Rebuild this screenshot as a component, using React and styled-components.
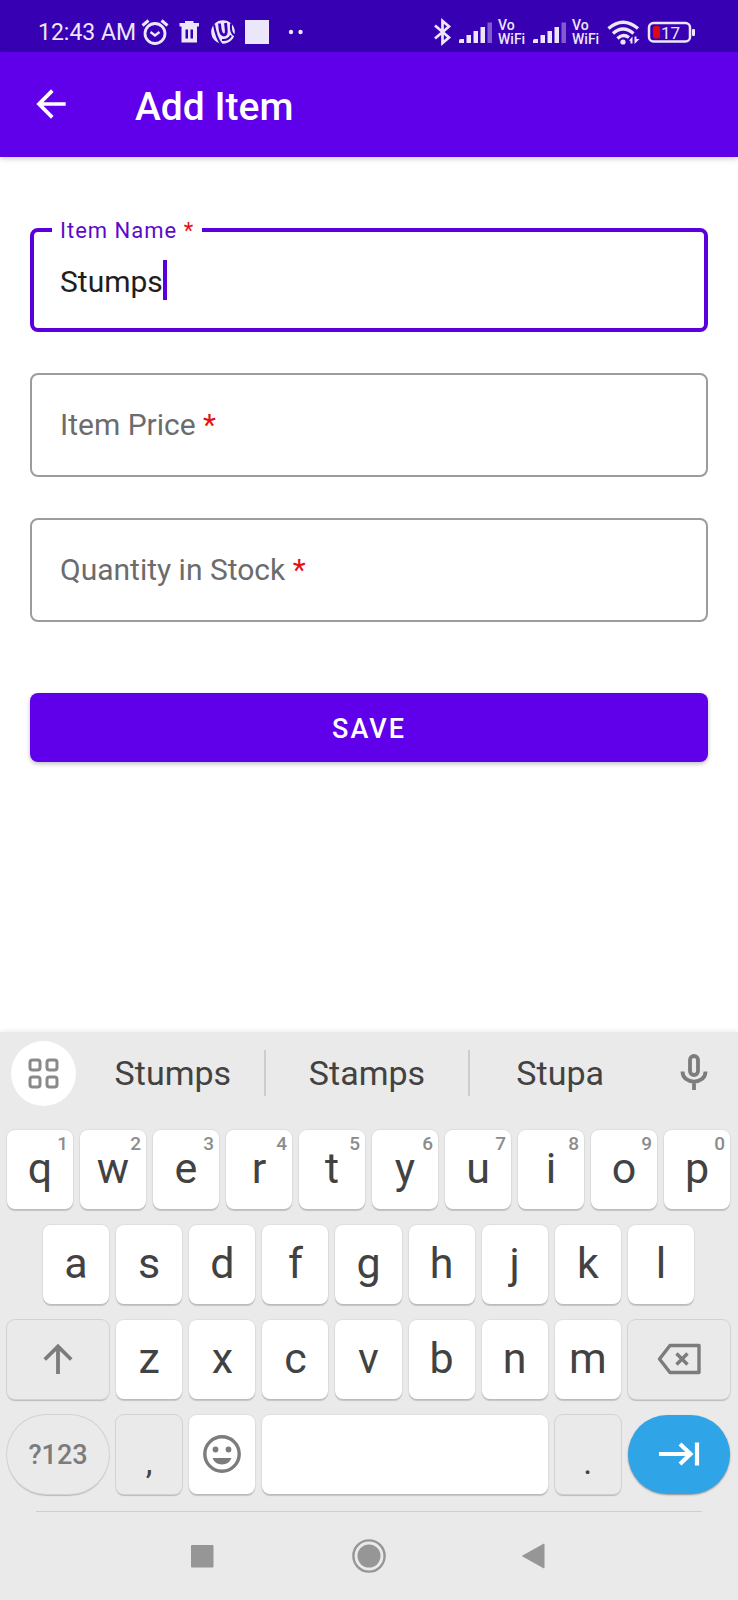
import React, { useState } from "react";
import styled, { createGlobalStyle, css } from "styled-components";
import { MdArrowBack } from "react-icons/md";

const color = {
  primary: "#6000ea",
  primaryDark: "#3700b3",
  outline: "#5a00dc",
  label: "#5b0acb",
  required: "#e60f0f",
  hint: "#6c6c6c",
  keyboard: "#eaeaea",
  keyText: "#424242",
  keyIcon: "#7c7c7c",
  nav: "#969696",
  enter: "#2fa4e7",
  status: "#ece6fb",
};

const GlobalStyle = createGlobalStyle`
  *, *::before, *::after { box-sizing: border-box; }
  body { margin: 0; background: #fff; font-family: Roboto, "Liberation Sans", sans-serif; }
  button, input { font: inherit; margin: 0; padding: 0; border: 0; background: none; }
  button { cursor: pointer; }
  svg { display: block; flex: none; }
`;

const Screen = styled.div`
  min-height: 100vh;
  display: flex;
  flex-direction: column;
`;

/* Status bar */
const StatusBar = styled.div`
  height: 52px;
  padding: 12px 42px 0 38px;
  display: flex;
  align-items: center;
  justify-content: space-between;
  background: ${color.primaryDark};
  color: ${color.status};
`;
const StatusGroup = styled.div`
  display: flex;
  align-items: center;
  gap: ${(p) => p.$gap}px;
`;
const Clock = styled.time`
  font-size: 23px;
  line-height: 28px;
  padding: 2px 2px 0 0;
  white-space: nowrap;
`;
const VoWifi = styled.span`
  width: 29px;
  display: flex;
  flex-direction: column;
  font-size: 14px;
  line-height: 14px;
  font-weight: 500;
  white-space: nowrap;
`;

/* App bar */
const AppBar = styled.header`
  position: relative;
  height: 105px;
  padding: 0 29px;
  display: flex;
  align-items: center;
  gap: 62px;
  background: ${color.primary};
  color: #fff;
  box-shadow: 0 1px 6px rgba(0, 0, 0, 0.25);
`;
const BackButton = styled.button`
  color: inherit;
  padding-bottom: 2px;
`;
const Title = styled.h1`
  margin: 0;
  padding-top: 4px;
  font-size: 39px;
  line-height: 44px;
  font-weight: 500;
`;

/* Form */
const Form = styled.form`
  flex: 1;
  padding: 71px 30px 40px;
  display: flex;
  flex-direction: column;
  gap: 41px;
`;
const FieldBox = styled.div`
  position: relative;
  height: 104px;
  display: flex;
  align-items: center;
  padding: 0 ${(p) => (p.$focused ? 26 : 28)}px;
  border: ${(p) => (p.$focused ? `4px solid ${color.outline}` : "2px solid #9c9c9c")};
  border-radius: 8px;
`;
const FieldLabel = styled.label`
  position: absolute;
  pointer-events: none;
  white-space: nowrap;
  ${(p) =>
    p.$floating
      ? css`
          top: -15px;
          left: 18px;
          padding: 0 8px;
          background: #fff;
          color: ${color.label};
          font-size: 22px;
          line-height: 28px;
          letter-spacing: 1px;
        `
      : css`
          top: 32px;
          left: 28px;
          color: ${color.hint};
          font-size: 30px;
          line-height: 36px;
        `}
`;
const Required = styled.span`
  color: ${color.required};
`;
const FieldInput = styled.input`
  height: 42px;
  padding-top: 2px;
  font-size: 30px;
  color: #1e1e1e;
  outline: none;
  caret-color: transparent;
  ${(p) => (p.$hug ? "field-sizing: content;" : "flex: 1; min-width: 0;")}
`;
const Caret = styled.span`
  width: 4px;
  height: 40px;
  background: ${color.outline};
`;
const SaveButton = styled.button`
  height: 69px;
  margin-top: 30px;
  padding-top: 2px;
  border-radius: 8px;
  background: ${color.primary};
  color: #fff;
  font-size: 27px;
  font-weight: 500;
  letter-spacing: 2px;
  box-shadow: 0 2px 4px rgba(0, 0, 0, 0.25);
`;

/* Keyboard */
const Keyboard = styled.section`
  background: ${color.keyboard};
  color: ${color.keyText};
  box-shadow: 0 -1px 5px rgba(0, 0, 0, 0.08);
`;
const SuggestionBar = styled.div`
  height: 82px;
  display: grid;
  grid-template-columns: 82px 184fr 205fr 180fr 88px;
  align-items: center;
`;
const AppsButton = styled.button`
  width: 65px;
  height: 65px;
  margin-left: 11px;
  border-radius: 50%;
  background: #fff;
  display: grid;
  place-items: center;
`;
const Suggestion = styled.button`
  height: 46px;
  color: inherit;
  font-size: 34px;
  line-height: 40px;
  border-right: ${(p) => (p.$divided ? "2px solid #cdcdcd" : "0")};
`;
const MicButton = styled.button`
  display: grid;
  place-items: center;
`;
const Keys = styled.div`
  display: flex;
  flex-direction: column;
  gap: 16px;
  padding: 16px 8px 16px 7px;
`;
const KeyRow = styled.div`
  display: flex;
  gap: 7px;
  padding: 0 ${(p) => (p.$inset ? 36 : 0)}px;
`;
const keyTone = {
  letter: css`
    background: #fff;
    box-shadow: 0 0 1px 1px rgba(0, 0, 0, 0.05), 0 2px 1px rgba(0, 0, 0, 0.16);
  `,
  quiet: css`
    background: ${color.keyboard};
    box-shadow: 0 0 0 1px #d2d2d2, 0 2px 1px rgba(0, 0, 0, 0.2);
  `,
  enter: css`
    background: ${color.enter};
    box-shadow: 0 1px 2px rgba(0, 0, 0, 0.4);
  `,
};
const Key = styled.button`
  position: relative;
  flex: ${(p) => p.$span || 66} 1 0;
  min-width: 0;
  height: 79px;
  display: flex;
  align-items: center;
  justify-content: center;
  padding-bottom: 3px;
  border-radius: ${(p) => (p.$round ? 40 : 8)}px;
  color: inherit;
  font-size: 43px;
  line-height: 50px;
  ${(p) => keyTone[p.$tone || "letter"]}
`;
const IconKey = styled(Key)`
  padding: 0 0 2px;
  color: ${color.keyIcon};
`;
const ModeKey = styled(IconKey)`
  padding: 0;
  font-size: 27px;
  font-weight: 500;
`;
const PunctuationKey = styled(Key)`
  padding: 14px 0 0;
  font-size: 34px;
`;
const KeyHint = styled.span`
  position: absolute;
  top: 3px;
  right: 5px;
  font-size: 19px;
  line-height: 22px;
  font-weight: 500;
  color: #8c8c8c;
`;
const NavBar = styled.nav`
  height: 90px;
  display: grid;
  grid-template-columns: repeat(3, 1fr);
  padding: 2px 16% 0;
  position: relative;
  &::before {
    content: "";
    position: absolute;
    top: 1px;
    left: 36px;
    right: 36px;
    height: 1px;
    background: #cfcfcf;
  }
`;
const NavButton = styled.button`
  display: grid;
  place-items: center;
`;

/* Icons */
const AlarmIcon = () => (
  <svg width="34" height="30" viewBox="0 0 34 30" fill="none" stroke="currentColor">
    <circle cx="17" cy="16.5" r="10" strokeWidth="2.8" />
    <path d="M4.5 8.5 L10.5 3.5 M29.5 8.5 L23.5 3.5" strokeWidth="3" />
    <path d="M12.5 15 L17 18.5 L21.5 15" strokeWidth="2.4" />
  </svg>
);
const TrashIcon = () => (
  <svg width="34" height="30" viewBox="0 0 34 30" fill="currentColor" fillRule="evenodd">
    <path d="M7.5 6 H13 V4 H21.5 V6 H27 V9.5 H7.5Z" />
    <path d="M9.5 9 H25 V25.500 H9.5Z M13.500 12.5 V21.500 H16 V12.5Z M18.5 12.5 V21.500 H21 V12.5Z" />
  </svg>
);
const TorrentIcon = () => (
  <svg width="34" height="30" viewBox="0 0 34 30" fill="none">
    <circle cx="17" cy="15" r="11.8" fill="currentColor" />
    <path d="M8 7.500 C9.500 17 11 22 15.500 27.500" stroke={color.primaryDark} strokeWidth="2" />
    <path d="M13.500 6.500 C14 13 14.500 18 18 18 C21 18 20.500 14 19.500 6" stroke={color.primaryDark} strokeWidth="2.800" />
    <path d="M25 6.500 C24.500 13 25.500 17.500 29 18.500 M16 23 C20 23.500 23.500 21.500 25 18.500" stroke={color.primaryDark} strokeWidth="2" />
  </svg>
);
const SquareIcon = () => (
  <svg width="34" height="30" viewBox="0 0 34 30" fill="currentColor">
    <rect x="5" y="3" width="24" height="24" />
  </svg>
);
const MoreDots = () => (
  <svg width="34" height="30" viewBox="0 0 34 30" fill="currentColor">
    <circle cx="17" cy="15" r="2.2" />
    <circle cx="26.5" cy="15" r="2.2" />
  </svg>
);
const BluetoothIcon = () => (
  <svg width="20" height="30" viewBox="0 0 20 30" fill="none" stroke="currentColor" strokeWidth="2.7">
    <path d="M2 8.500 L16 20.5 L9.5 26 V4 L16 9.5 L2 21.500" />
  </svg>
);
const SignalIcon = () => (
  <svg width="33" height="30" viewBox="0 0 33 30" fill="currentColor">
    <path d="M0 26 V23.500 Q0 22 1.500 22 H5 V26Z" />
    <rect x="7.500" y="18" width="4.500" height="8" />
    <rect x="14.500" y="14" width="4.500" height="12" />
    <rect x="21.500" y="10" width="4.500" height="16" />
    <rect x="28.500" y="5.500" width="4.500" height="20.500" opacity=".4" />
  </svg>
);
const WifiIcon = () => (
  <svg width="33" height="30" viewBox="0 0 33 30" fill="none" stroke="currentColor" strokeWidth="3.300">
    <path d="M1.5 11.5 Q16 -1 31 11.5" />
    <path d="M6 16.5 Q16 7.500 26.500 16.5" />
    <path d="M10.500 21.500 Q16 16 22 20.500" />
    <circle cx="16" cy="25" r="2.600" fill="currentColor" stroke="none" />
    <path d="M22 23.500 L25.500 19.500 V26.500 H23.500 V24Z M27.500 19.500 H29.500 V22 H32.500 L27.500 27Z" fill="currentColor" stroke="none" />
  </svg>
);
const BatteryIcon = () => (
  <svg width="50" height="30" viewBox="0 0 50 30">
    <rect x="3" y="6" width="41" height="18.5" rx="4.5" fill="none" stroke="currentColor" strokeWidth="2.5" />
    <rect x="46" y="12" width="3" height="7" rx="1" fill="currentColor" />
    <rect x="7" y="9" width="7" height="12.5" rx="2.5" fill="#de0812" />
    <text x="15" y="21.5" fontSize="17" fontFamily="Roboto, sans-serif" fill="currentColor">17</text>
  </svg>
);
const AppsIcon = () => (
  <svg width="31" height="31" viewBox="0 0 31 31" fill="none" stroke="#8a8a8a" strokeWidth="3">
    {[2, 19].map((x) =>
      [2, 19].map((y) => <rect key={`${x}${y}`} x={x} y={y} width="10" height="10" rx="2.5" />)
    )}
  </svg>
);
const MicIcon = () => (
  <svg width="28" height="38" viewBox="0 0 28 38" fill="none" stroke={color.keyIcon} strokeWidth="3.8">
    <rect x="10" y="2" width="8" height="19" rx="4" />
    <path d="M2.500 17.5 C2.500 31 25.500 31 25.500 17.5 M14 27 V36" />
  </svg>
);
const ShiftIcon = () => (
  <svg width="30" height="32" viewBox="0 0 30 32" fill="none" stroke="currentColor" strokeWidth="3.8">
    <path d="M1.800 16.5 L15 3.5 L28.2 16.5 M15 3.5 V31" />
  </svg>
);
const DeleteIcon = () => (
  <svg width="44" height="32" viewBox="0 0 44 32" fill="none" stroke="currentColor" strokeWidth="3.4" strokeLinejoin="round">
    <path d="M13 2.500 H42 V29.500 H13 L2.500 16Z" />
    <path d="M19.500 10.500 L30.500 21.500 M30.500 10.500 L19.500 21.500" />
  </svg>
);
const EmojiIcon = () => (
  <svg width="38" height="38" viewBox="0 0 38 38" fill="currentColor">
    <circle cx="19" cy="19" r="17.2" fill="none" stroke="currentColor" strokeWidth="3.4" />
    <circle cx="12.5" cy="14.5" r="2.9" />
    <circle cx="25.5" cy="14.5" r="2.9" />
    <path d="M9.500 23 H28.500 Q26 29.500 19 29.500 Q12 29.500 9.500 23Z" />
  </svg>
);
const NextFieldIcon = () => (
  <svg width="42" height="28" viewBox="0 0 42 28" fill="none" stroke="#fff" strokeWidth="4.2">
    <path d="M1 14 H33 M22 4 L32.500 14 L22 24 M39 2.500 V25.500" />
  </svg>
);

const numberRow = [..."qwertyuiop"].map((letter, i) => ({ letter, hint: String((i + 1) % 10) }));
const homeRow = [..."asdfghjkl"];
const bottomRow = [..."zxcvbnm"];
const fields = [
  { id: "name", label: "Item Name" },
  { id: "price", label: "Item Price" },
  { id: "quantity", label: "Quantity in Stock" },
];

function OutlinedField({ id, label, value, focused, onFocus, onChange }) {
  return (
    <FieldBox $focused={focused}>
      <FieldLabel htmlFor={id} $floating={focused || value !== ""}>
        {label} <Required>*</Required>
      </FieldLabel>
      <FieldInput
        id={id}
        type="text"
        autoComplete="off"
        required
        $hug={focused}
        value={value}
        onFocus={onFocus}
        onChange={(e) => onChange(e.target.value)}
      />
      {focused && <Caret />}
    </FieldBox>
  );
}

export default function App() {
  const [values, setValues] = useState({ name: "Stumps", price: "", quantity: "" });
  const [active, setActive] = useState("name");
  const setValue = (id, value) => setValues((v) => ({ ...v, [id]: value }));
  const type = (text) => setValue(active, values[active] + text);
  const nextField = () => {
    const i = fields.findIndex((f) => f.id === active);
    setActive(fields[(i + 1) % fields.length].id);
  };

  return (
    <Screen>
      <GlobalStyle />
      <StatusBar>
        <StatusGroup $gap={0}>
          <Clock>12:43 AM</Clock>
          <AlarmIcon />
          <TrashIcon />
          <TorrentIcon />
          <SquareIcon />
          <MoreDots />
        </StatusGroup>
        <StatusGroup $gap={6}>
          <BluetoothIcon />
          <SignalIcon />
          <VoWifi><span>Vo</span><span>WiFi</span></VoWifi>
          <SignalIcon />
          <VoWifi><span>Vo</span><span>WiFi</span></VoWifi>
          <WifiIcon />
          <BatteryIcon />
        </StatusGroup>
      </StatusBar>

      <AppBar>
        <BackButton type="button" aria-label="Back">
          <MdArrowBack size={44} />
        </BackButton>
        <Title>Add Item</Title>
      </AppBar>

      <Form onSubmit={(e) => e.preventDefault()}>
        {fields.map((f) => (
          <OutlinedField
            key={f.id}
            {...f}
            value={values[f.id]}
            focused={active === f.id}
            onFocus={() => setActive(f.id)}
            onChange={(v) => setValue(f.id, v)}
          />
        ))}
        <SaveButton type="submit">SAVE</SaveButton>
      </Form>

      <Keyboard aria-label="Keyboard">
        <SuggestionBar>
          <AppsButton type="button" aria-label="Keyboard tools"><AppsIcon /></AppsButton>
          {["Stumps", "Stamps", "Stupa"].map((word, i) => (
            <Suggestion key={word} type="button" $divided={i < 2} onClick={() => setValue(active, word)}>
              {word}
            </Suggestion>
          ))}
          <MicButton type="button" aria-label="Voice input"><MicIcon /></MicButton>
        </SuggestionBar>
        <Keys>
          <KeyRow>
            {numberRow.map(({ letter, hint }) => (
              <Key key={letter} type="button" onClick={() => type(letter)}>
                {letter}
                <KeyHint>{hint}</KeyHint>
              </Key>
            ))}
          </KeyRow>
          <KeyRow $inset>
            {homeRow.map((letter) => (
              <Key key={letter} type="button" onClick={() => type(letter)}>{letter}</Key>
            ))}
          </KeyRow>
          <KeyRow>
            <IconKey type="button" aria-label="Shift" $span={102} $tone="quiet"><ShiftIcon /></IconKey>
            {bottomRow.map((letter) => (
              <Key key={letter} type="button" onClick={() => type(letter)}>{letter}</Key>
            ))}
            <IconKey
              type="button"
              aria-label="Delete"
              $span={102}
              $tone="quiet"
              onClick={() => setValue(active, values[active].slice(0, -1))}
            >
              <DeleteIcon />
            </IconKey>
          </KeyRow>
          <KeyRow>
            <ModeKey type="button" $span={102} $tone="quiet" $round>?123</ModeKey>
            <PunctuationKey type="button" $tone="quiet" onClick={() => type(",")}>,</PunctuationKey>
            <IconKey type="button" aria-label="Emoji"><EmojiIcon /></IconKey>
            <Key type="button" aria-label="Space" $span={285} onClick={() => type(" ")} />
            <PunctuationKey type="button" $tone="quiet" onClick={() => type(".")}>.</PunctuationKey>
            <IconKey type="button" aria-label="Next field" $span={102} $tone="enter" $round onClick={nextField}>
              <NextFieldIcon />
            </IconKey>
          </KeyRow>
        </Keys>
        <NavBar aria-label="System">
          <NavButton type="button" aria-label="Recent apps">
            <svg width="34" height="34" viewBox="0 0 34 34"><rect x="6" y="6" width="22.5" height="22.5" rx="1" fill={color.nav} /></svg>
          </NavButton>
          <NavButton type="button" aria-label="Home">
            <svg width="34" height="34" viewBox="0 0 34 34">
              <circle cx="17" cy="17" r="15.6" fill="none" stroke={color.nav} strokeWidth="2.4" />
              <circle cx="17" cy="17" r="11.5" fill={color.nav} />
            </svg>
          </NavButton>
          <NavButton type="button" aria-label="System back">
            <svg width="34" height="34" viewBox="0 0 34 34"><path d="M3.5 17 L25 5 V29Z" fill={color.nav} stroke={color.nav} strokeWidth="1" strokeLinejoin="round" /></svg>
          </NavButton>
        </NavBar>
      </Keyboard>
    </Screen>
  );
}
